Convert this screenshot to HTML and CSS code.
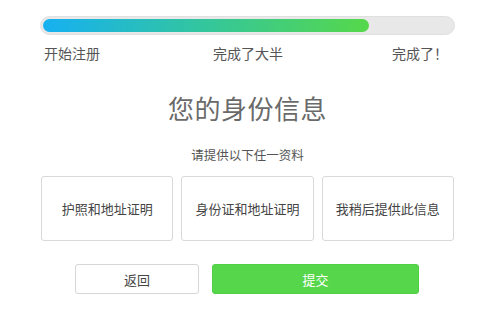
FILE: index.html
```html
<!DOCTYPE html>
<html lang="zh-CN">
<head>
    <meta charset="UTF-8">
    <meta name="viewport" content="width=device-width, initial-scale=1.0">
    <title>您的身份信息</title>
    <link rel="stylesheet" href="styles.css">
</head>
<body>

    <div class="page">
        <!-- Progress -->
        <div class="progress">
            <div class="progress-fill" style="width: 79.6%"></div>
        </div>
        <div class="steps">
            <span>开始注册</span>
            <span class="step-mid">完成了大半</span>
            <span>完成了！</span>
        </div>

        <h1 class="title">您的身份信息</h1>
        <p class="subtitle">请提供以下任一资料</p>

        <!-- Options -->
        <div class="options">
            <button class="option">护照和地址证明</button>
            <button class="option">身份证和地址证明</button>
            <button class="option">我稍后提供此信息</button>
        </div>

        <div class="actions">
            <button class="btn btn-back">返回</button>
            <button class="btn btn-submit">提交</button>
        </div>
    </div>

</body>
</html>
```

FILE: styles.css
```css
body {
    font-family: "Noto Sans CJK SC", "Liberation Sans", sans-serif;
    margin: 0;
    padding: 0;
    background-color: #fff;
    color: #555;
}

.page {
    width: 415px;
    padding: 16px 0 0 40px;
}

.progress {
    height: 19px;
    background-color: #e8e8e8;
    border: 1px solid #e0e0e0;
    border-radius: 10px;
    padding: 2px;
    box-sizing: border-box;
}

.progress-fill {
    height: 100%;
    border-radius: 8px;
    background: linear-gradient(to right, #16b0f2, #34c69c 50%, #56d84a);
}

.steps {
    display: flex;
    justify-content: space-between;
    margin-top: 8px;
    padding: 0 7px 0 4px;
    font-size: 14px;
    line-height: 20px;
    color: #555;
}

.step-mid {
    margin-left: 4px;
}

.title {
    margin: 27px 0 0;
    text-align: center;
    font-size: 26px;
    font-weight: normal;
    line-height: 36px;
    color: #6a6a6a;
    letter-spacing: 0.5px;
}

.subtitle {
    margin: 20px 0 0;
    text-align: center;
    font-size: 12.5px;
    line-height: 18px;
    color: #555;
}

.options {
    display: grid;
    grid-template-columns: repeat(3, 1fr);
    gap: 8px;
    margin: 12px 1px 0;
}

.option {
    height: 65px;
    background-color: #fff;
    border: 1px solid #d9d9d9;
    border-radius: 3px;
    font-family: inherit;
    font-size: 13px;
    color: #444;
    padding: 0;
}

.actions {
    display: flex;
    gap: 13px;
    margin-top: 23px;
    padding-left: 35px;
}

.btn {
    height: 30px;
    border-radius: 3px;
    font-family: inherit;
    font-size: 13px;
    padding: 0;
}

.btn-back {
    width: 124px;
    background-color: #fff;
    border: 1px solid #d6d6d6;
    color: #444;
}

.btn-submit {
    width: 207px;
    background-color: #56d64b;
    border: 1px solid #50cf45;
    color: #fff;
}
```
